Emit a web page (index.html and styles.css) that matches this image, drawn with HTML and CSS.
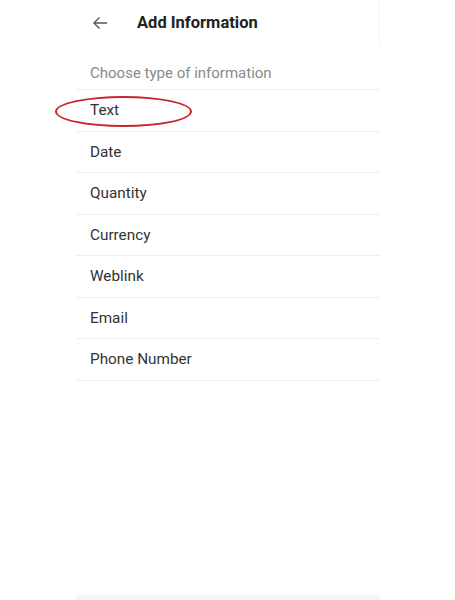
FILE: index.html
```html
<!DOCTYPE html>
<html>
<head>
<meta charset="utf-8">
<link rel="stylesheet" href="styles.css">
</head>
<body>
<div class="screen">
  <div class="header">
    <svg class="back" width="16" height="14" viewBox="0 0 16 14"><path d="M15 7H2M7.5 1.5L2 7l5.5 5.5" fill="none" stroke="#555" stroke-width="1.4"/></svg>
    <span class="title">Add Information</span>
  </div>
  <div class="subtitle">Choose type of information</div>
  <ul class="list">
    <li class="item marked">Text<span class="ring"></span></li>
    <li class="item">Date</li>
    <li class="item">Quantity</li>
    <li class="item">Currency</li>
    <li class="item">Weblink</li>
    <li class="item">Email</li>
    <li class="item">Phone Number</li>
  </ul>
  <div class="spacer"></div>
  <div class="bottom"></div>
</div>
</body>
</html>
```
FILE: styles.css
```css
html, body {
  margin: 0;
  padding: 0;
  background: #fff;
  height: 100%;
}
body {
  font-family: Roboto, "Liberation Sans", sans-serif;
}
.screen {
  margin-left: 76px;
  width: 304px;
  height: 600px;
  display: flex;
  flex-direction: column;
}
.header {
  height: 45px;
  display: flex;
  align-items: center;
  border-right: 1px solid #f1f4f4;
  box-sizing: border-box;
}
.back {
  margin-left: 16px;
  margin-right: 29px;
}
.title {
  font-size: 16.5px;
  font-weight: 700;
  color: #222;
}
.subtitle {
  height: 45px;
  box-sizing: border-box;
  padding-left: 14px;
  padding-top: 19px;
  font-size: 15px;
  color: #8a8a8a;
  border-bottom: 1px solid #efefef;
}
.list {
  list-style: none;
  margin: 0;
  padding: 0;
}
.item {
  position: relative;
  height: 41.5px;
  box-sizing: border-box;
  display: flex;
  align-items: center;
  padding-left: 14px;
  font-size: 15.3px;
  color: #333;
  border-bottom: 1px solid #efefef;
}
.ring {
  position: absolute;
  left: -21px;
  top: 6px;
  width: 137px;
  height: 31px;
  box-sizing: border-box;
  border: 2px solid #c9242c;
  border-radius: 50%;
}
.spacer {
  flex: 1;
}
.bottom {
  height: 5px;
  background: #f6f6f6;
}
```
